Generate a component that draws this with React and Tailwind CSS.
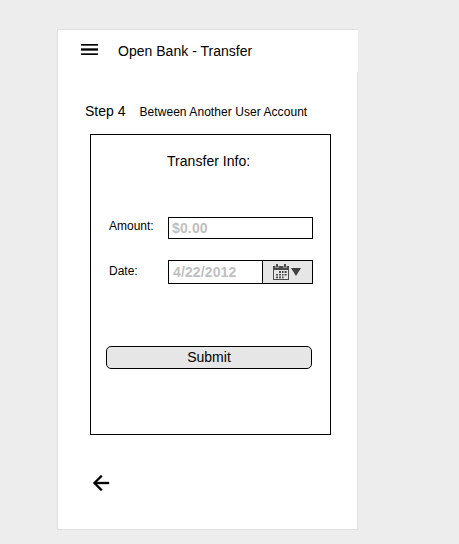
function MenuIcon() {
  return (
    <svg width="17" height="12" viewBox="0 0 17 12" className="shrink-0" shapeRendering="crispEdges">
      <path fill="#555" d="M0 1h17v1H0zM0 4h17v1H0zM0 6h17v1H0zM0 9h17v1H0z" />
      <path fill="#000" d="M0 0h17v1H0zM0 5h17v1H0zM0 10h17v1H0z" />
    </svg>
  );
}

function CalendarIcon() {
  return (
    <svg width="16" height="16" viewBox="0 0 16 16" className="shrink-0">
      <path
        fill="#4c4c4c"
        fillRule="evenodd"
        d="M0 2h2.5v2h3V2h5v2h3V2H16v14H0zM1 6v9h14V6z"
      />
      <path fill="#4c4c4c" d="M3 0h2v3.4H3zM11 0h2v3.4h-2z" />
      <path
        fill="#4c4c4c"
        d="M6 7h2v2H6zM9 7h1.6v2H9zM11.6 7h2v2h-2zM3 10h2v1.6H3zM6 10h2v1.6H6zM9 10h1.6v1.6H9zM11.6 10h2v1.6h-2zM3 12.4h2v1.8H3zM6 12.4h2v1.8H6zM9 12.4h1.6v1.8H9z"
      />
    </svg>
  );
}

function BackIcon() {
  return (
    <svg width="16" height="16" viewBox="4 4 16 16" className="shrink-0 overflow-visible">
      <path
        stroke="#000"
        strokeWidth="0.35"
        d="M20 11H7.83l5.59-5.59L12 4l-8 8 8 8 1.41-1.41L7.83 13H20v-2z"
      />
    </svg>
  );
}

export default function App() {
  return (
    <div className="h-[544px] w-[459px] overflow-hidden bg-[#ededed] pt-[29px] pl-[57px] font-['Liberation_Sans',Arial,sans-serif] text-black">
      <main className="flex h-[501px] w-[301px] flex-col border border-[#dfdfdf] bg-white">
        <header className="-mr-px flex h-[42px] shrink-0 bg-white pl-[23px]">
          <button className="mt-[14px] h-3">
            <MenuIcon />
          </button>
          <h1 className="mt-[11px] ml-5 text-[14px] leading-5 tracking-[0.02px] whitespace-nowrap">Open Bank - Transfer</h1>
        </header>

        <div className="mt-[29px] flex h-5 shrink-0 items-baseline pl-[27px] whitespace-nowrap">
          <span className="text-[14px] leading-5">Step 4</span>
          <span className="ml-[14px] text-[12px] leading-5 tracking-[0.06px]">Between Another User Account</span>
        </div>

        <form className="mt-[13px] ml-8 flex h-[301px] w-[241px] shrink-0 flex-col border border-black">
          <h2 className="mt-4 pl-[76px] text-[14px] leading-5 tracking-[0.04px] whitespace-nowrap">Transfer Info:</h2>

          <label className="mt-[46px] flex h-[22px] pl-[18px]">
            <span className="w-[59px] text-[12px] leading-[18px]">Amount:</span>
            <span className="flex h-[22px] w-[145px] items-center border border-black pl-[3px] text-[14px] font-bold tracking-[0.15px] text-[#bfbfbf]">
              $0.00
            </span>
          </label>

          <label className="mt-[21px] flex h-6 pl-[18px]">
            <span className="w-[59px] text-[12px] leading-[22px]">Date:</span>
            <span className="flex h-6 w-[145px] border border-black">
              <span className="flex w-[93px] items-center pl-1 text-[14px] font-bold tracking-[0.12px] text-[#bfbfbf]">4/22/2012</span>
              <span className="flex flex-1 items-center border-l border-black bg-[#e6e6e6] pl-[10px]">
                <CalendarIcon />
                <svg width="10" height="8" viewBox="0 0 10 8" className="ml-0.5">
                  <path fill="#404040" d="M0 0h10L5 8z" />
                </svg>
              </span>
            </span>
          </label>

          <button
            type="button"
            className="mt-[62px] ml-[15px] flex h-[23px] w-[206px] items-center justify-center rounded-[5px] border border-black bg-[#e6e6e6] text-[14px]"
          >
            Submit
          </button>
        </form>

        <footer className="mt-10 pl-[35px]">
          <button className="block">
            <BackIcon />
          </button>
        </footer>
      </main>
    </div>
  );
}
